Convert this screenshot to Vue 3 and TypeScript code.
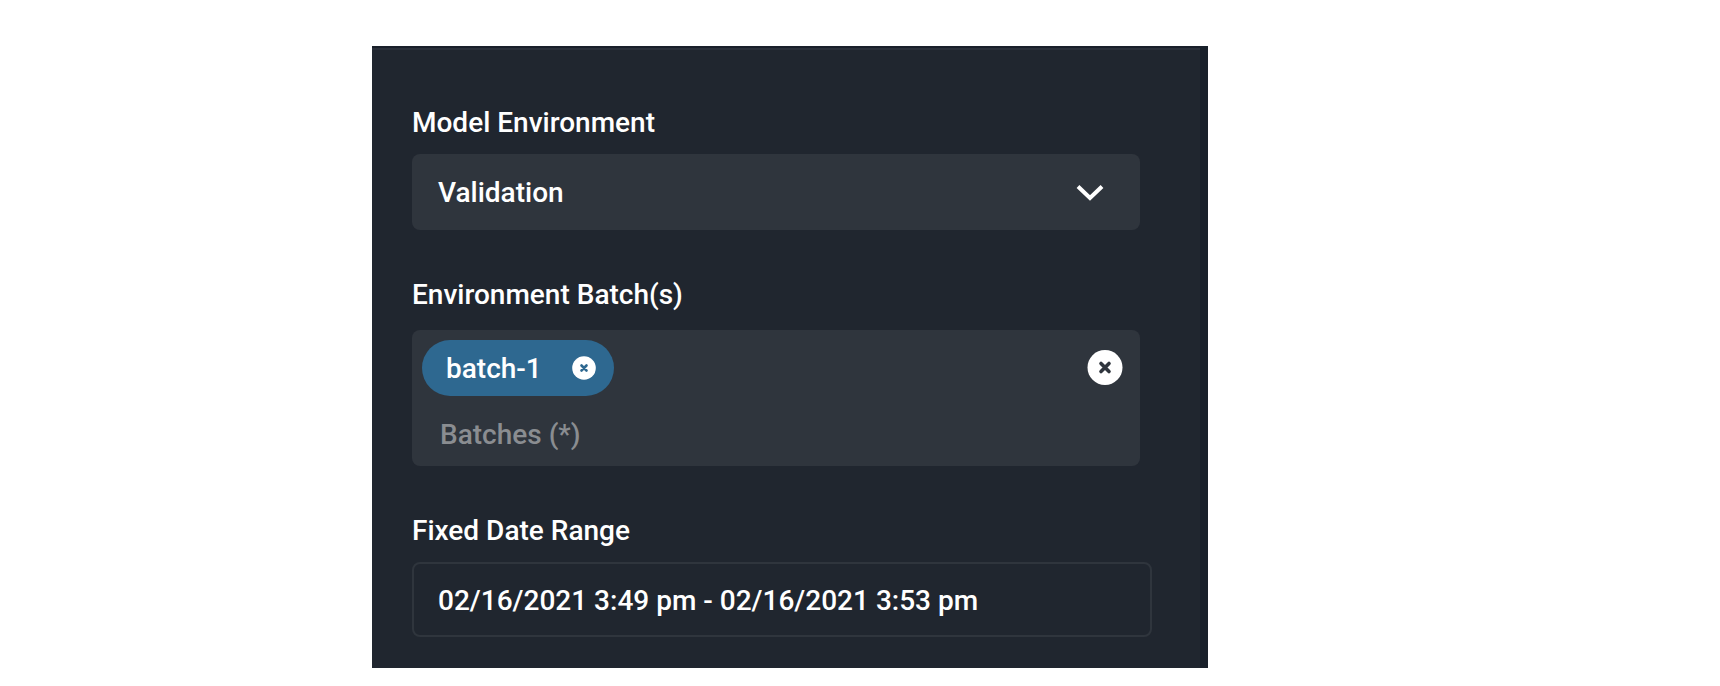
<script setup lang="ts">
const chip = 'batch-1'
</script>

<template>
  <div class="page">
    <div class="panel">
      <div class="content">
        <div class="label first">Model Environment</div>
        <div class="select">
          <span>Validation</span>
          <svg class="chev" width="28" height="18" viewBox="0 0 28 18"><path d="M2 3.500l12 11.500L26 3.500" fill="none" stroke="#fff" stroke-width="4" /></svg>
        </div>
        <div class="label second">Environment Batch(s)</div>
        <div class="multi">
          <div class="row">
            <div class="chip">
              <span>{{ chip }}</span>
              <svg width="24" height="24" viewBox="0 0 24 24"><circle cx="12" cy="12" r="11.800" fill="#fff" /><path d="M9.500 9.500l5 5M14.500 9.500l-5 5" stroke="#2e6890" stroke-width="2.600" stroke-linecap="round" /></svg>
            </div>
            <svg class="clear" width="36" height="36" viewBox="0 0 36 36"><circle cx="18" cy="17.500" r="17.500" fill="#fff" /><path d="M14 13.500l8 8M22 13.500l-8 8" stroke="#2f353d" stroke-width="3.600" stroke-linecap="round" /></svg>
          </div>
          <div class="placeholder">Batches (*)</div>
        </div>
        <div class="label third">Fixed Date Range</div>
        <div class="date">02/16/2021 3:49 pm - 02/16/2021 3:53 pm</div>
      </div>
    </div>
  </div>
</template>

<style>
html, body { margin: 0; background: #fff; }
</style>

<style scoped>
.page {
  width: 1720px;
  height: 686px;
  padding: 46px 0 0 372px;
  box-sizing: border-box;
  background: #fff;
  font-family: Roboto, "Liberation Sans", sans-serif;
}
.panel {
  width: 836px;
  height: 622px;
  box-sizing: border-box;
  background: #20262f;
  border-right: 8px solid #19202a;
  border-top: 2px solid #19202a;
  overflow: hidden;
}
.content {
  border-top: 2px solid #2a303a;
  padding: 0 0 0 40px;
  color: #fff;
}
.label {
  font-size: 28px;
  font-weight: 500;
  line-height: 34px;
}
.first { padding-top: 56px; }
.second { margin-top: 48px; }
.third { margin-top: 48px; }
.select {
  margin-top: 14px;
  width: 728px;
  height: 76px;
  box-sizing: border-box;
  padding: 0 36px 0 26px;
  background: #2f353d;
  border-radius: 8px;
  display: flex;
  align-items: center;
  justify-content: space-between;
  font-size: 28px;
  font-weight: 500;
}
.multi {
  margin-top: 18px;
  width: 728px;
  height: 136px;
  box-sizing: border-box;
  padding: 10px 17px 0 10px;
  background: #2f353d;
  border-radius: 8px;
}
.row {
  display: flex;
  align-items: center;
  justify-content: space-between;
}
.chip {
  width: 192px;
  height: 56px;
  box-sizing: border-box;
  padding: 0 18px 0 24px;
  border-radius: 28px;
  background: #2e6890;
  display: flex;
  align-items: center;
  justify-content: space-between;
  font-size: 28px;
  font-weight: 500;
}
.placeholder {
  margin: 21px 0 0 18px;
  font-size: 28px;
  font-weight: 500;
  line-height: 36px;
  color: #8a8d91;
}
.date {
  margin-top: 14px;
  width: 740px;
  height: 75px;
  box-sizing: border-box;
  border: 2px solid #2f353d;
  border-radius: 8px;
  padding: 2px 0 0 24px;
  display: flex;
  align-items: center;
  font-size: 28px;
  font-weight: 500;
}
</style>
